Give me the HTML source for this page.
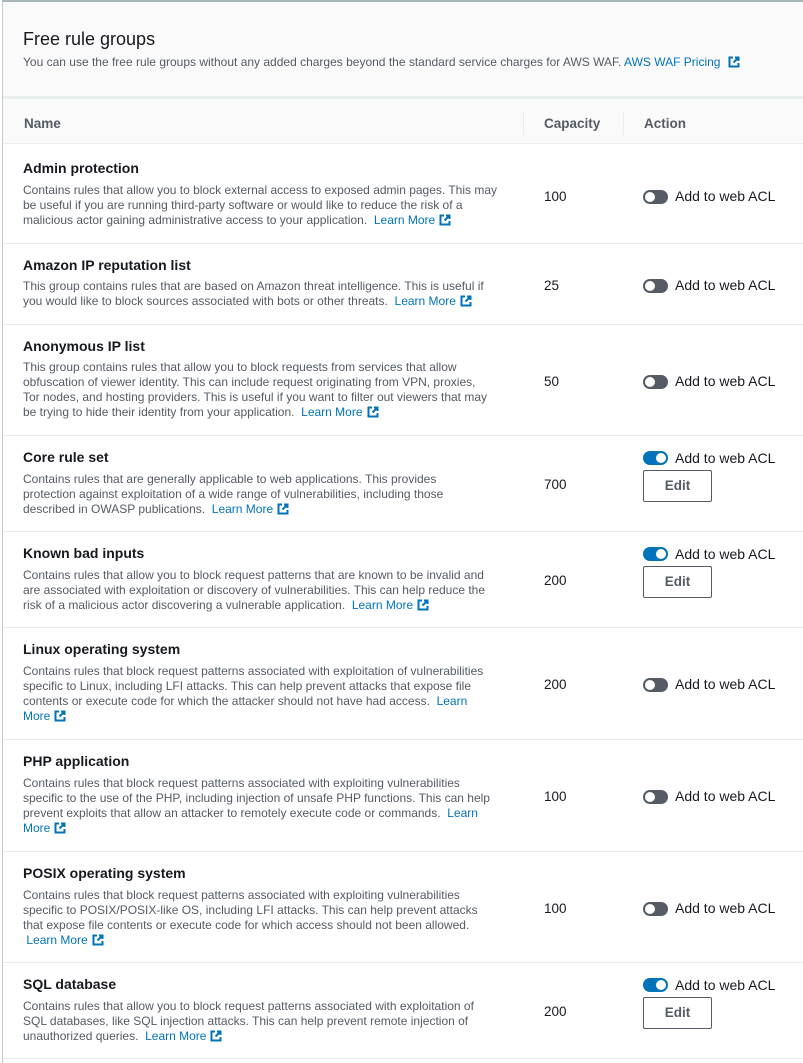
<!DOCTYPE html>
<html><head><meta charset="utf-8"><style>
*{margin:0;padding:0;box-sizing:border-box}
body{width:803px;height:1063px;overflow:hidden;background:#fff;font-family:"Liberation Sans",sans-serif;color:#16191f;position:relative}
.frame{position:absolute;left:2px;top:0;width:801px;height:1063px;border-left:1px solid #c8cccc;border-top:2px solid #aab7b8}
.hdr{position:absolute;left:3px;top:2px;width:800px;height:95px;background:#fafafa}
.h1{position:absolute;left:23px;top:29px;font-size:18px;color:#16191f}
.sub{position:absolute;left:23px;top:55px;font-size:12px;color:#545b64;white-space:nowrap}
a{color:#0073bb;text-decoration:none}
.band{position:absolute;left:3px;top:96px;width:800px;height:3px;background:#eaeded}
.th{position:absolute;left:3px;top:99px;width:800px;height:45px;background:#fafafa;border-bottom:1px solid #eaeded;font-weight:bold;font-size:13.5px;color:#545b64}
.th span{position:absolute;top:17px}
.sep{position:absolute;top:12px;width:1px;height:24px;background:#eaeded}
.row{position:absolute;left:3px;width:800px;border-bottom:1px solid #eaeded}
.t{position:absolute;left:20px;font-weight:bold;font-size:14px;white-space:nowrap}
.d{position:absolute;left:20px;font-size:12px;line-height:15px;color:#545b64;white-space:nowrap}
.cap{position:absolute;left:541px;font-size:13.5px}
.tg{position:absolute;left:640px;width:25px;height:14px;border-radius:7px;background:#545b64}
.tg::after{content:"";position:absolute;top:2px;left:2px;width:10px;height:10px;border-radius:50%;background:#fff}
.tg.on{background:#0073bb}.tg.on::after{left:13px}
.lb{position:absolute;left:672px;font-size:14px;white-space:nowrap}
.ed{position:absolute;left:640px;width:69px;height:32px;border:1px solid #545b64;border-radius:2px;font-weight:bold;font-size:13.5px;color:#545b64;text-align:center;line-height:30px}
.ex{display:inline-block;width:12px;height:12px;vertical-align:-2px;margin-left:4px}
</style></head><body>
<div class="hdr"></div>
<div class="frame"></div>
<div class="h1">Free rule groups</div>
<div class="sub">You can use the free rule groups without any added charges beyond the standard service charges for AWS WAF. <a>AWS WAF Pricing <svg class="ex" viewBox="0 0 12 12"><path d="M5 1.5H1.5v9h9V7M7 1.5h3.5V5M10.5 1.5 5.5 6.5" fill="none" stroke="#0073bb" stroke-width="2"/></svg></a></div>
<div class="band"></div>
<div class="th"><span style="left:21px">Name</span><div class="sep" style="left:520px"></div><span style="left:541px">Capacity</span><div class="sep" style="left:620px"></div><span style="left:641px">Action</span></div>

<div class="row" style="top:144px;height:100px">
<div class="t" style="top:16px">Admin protection</div>
<div class="d" style="top:39px">Contains rules that allow you to block external access to exposed admin pages. This may<br>be useful if you are running third-party software or would like to reduce the risk of a<br>malicious actor gaining administrative access to your application.&nbsp; <a>Learn More<svg class="ex" viewBox="0 0 12 12"><path d="M5 1.5H1.5v9h9V7M7 1.5h3.5V5M10.5 1.5 5.5 6.5" fill="none" stroke="#0073bb" stroke-width="2"/></svg></a></div>
<div class="cap" style="top:45px">100</div><div class="tg" style="top:46px"></div><div class="lb" style="top:44px">Add to web ACL</div></div>

<div class="row" style="top:244px;height:81px">
<div class="t" style="top:13px">Amazon IP reputation list</div>
<div class="d" style="top:35px">This group contains rules that are based on Amazon threat intelligence. This is useful if<br>you would like to block sources associated with bots or other threats.&nbsp; <a>Learn More<svg class="ex" viewBox="0 0 12 12"><path d="M5 1.5H1.5v9h9V7M7 1.5h3.5V5M10.5 1.5 5.5 6.5" fill="none" stroke="#0073bb" stroke-width="2"/></svg></a></div>
<div class="cap" style="top:34px">25</div><div class="tg" style="top:35px"></div><div class="lb" style="top:33px">Add to web ACL</div></div>

<div class="row" style="top:325px;height:111px">
<div class="t" style="top:13px">Anonymous IP list</div>
<div class="d" style="top:35px">This group contains rules that allow you to block requests from services that allow<br>obfuscation of viewer identity. This can include request originating from VPN, proxies,<br>Tor nodes, and hosting providers. This is useful if you want to filter out viewers that may<br>be trying to hide their identity from your application.&nbsp; <a>Learn More<svg class="ex" viewBox="0 0 12 12"><path d="M5 1.5H1.5v9h9V7M7 1.5h3.5V5M10.5 1.5 5.5 6.5" fill="none" stroke="#0073bb" stroke-width="2"/></svg></a></div>
<div class="cap" style="top:49px">50</div><div class="tg" style="top:50px"></div><div class="lb" style="top:48px">Add to web ACL</div></div>

<div class="row" style="top:436px;height:96px">
<div class="t" style="top:13px">Core rule set</div>
<div class="d" style="top:36px">Contains rules that are generally applicable to web applications. This provides<br>protection against exploitation of a wide range of vulnerabilities, including those<br>described in OWASP publications.&nbsp; <a>Learn More<svg class="ex" viewBox="0 0 12 12"><path d="M5 1.5H1.5v9h9V7M7 1.5h3.5V5M10.5 1.5 5.5 6.5" fill="none" stroke="#0073bb" stroke-width="2"/></svg></a></div>
<div class="cap" style="top:41px">700</div><div class="tg on" style="top:15px"></div><div class="lb" style="top:14px">Add to web ACL</div><div class="ed" style="top:34px">Edit</div></div>

<div class="row" style="top:532px;height:96px">
<div class="t" style="top:13px">Known bad inputs</div>
<div class="d" style="top:36px">Contains rules that allow you to block request patterns that are known to be invalid and<br>are associated with exploitation or discovery of vulnerabilities. This can help reduce the<br>risk of a malicious actor discovering a vulnerable application.&nbsp; <a>Learn More<svg class="ex" viewBox="0 0 12 12"><path d="M5 1.5H1.5v9h9V7M7 1.5h3.5V5M10.5 1.5 5.5 6.5" fill="none" stroke="#0073bb" stroke-width="2"/></svg></a></div>
<div class="cap" style="top:41px">200</div><div class="tg on" style="top:15px"></div><div class="lb" style="top:14px">Add to web ACL</div><div class="ed" style="top:34px">Edit</div></div>

<div class="row" style="top:628px;height:112px">
<div class="t" style="top:13px">Linux operating system</div>
<div class="d" style="top:36px">Contains rules that block request patterns associated with exploitation of vulnerabilities<br>specific to Linux, including LFI attacks. This can help prevent attacks that expose file<br>contents or execute code for which the attacker should not have had access.&nbsp; <a>Learn</a><br><a>More<svg class="ex" viewBox="0 0 12 12"><path d="M5 1.5H1.5v9h9V7M7 1.5h3.5V5M10.5 1.5 5.5 6.5" fill="none" stroke="#0073bb" stroke-width="2"/></svg></a></div>
<div class="cap" style="top:49px">200</div><div class="tg" style="top:50px"></div><div class="lb" style="top:48px">Add to web ACL</div></div>

<div class="row" style="top:740px;height:112px">
<div class="t" style="top:13px">PHP application</div>
<div class="d" style="top:36px">Contains rules that block request patterns associated with exploiting vulnerabilities<br>specific to the use of the PHP, including injection of unsafe PHP functions. This can help<br>prevent exploits that allow an attacker to remotely execute code or commands.&nbsp; <a>Learn</a><br><a>More<svg class="ex" viewBox="0 0 12 12"><path d="M5 1.5H1.5v9h9V7M7 1.5h3.5V5M10.5 1.5 5.5 6.5" fill="none" stroke="#0073bb" stroke-width="2"/></svg></a></div>
<div class="cap" style="top:49px">100</div><div class="tg" style="top:50px"></div><div class="lb" style="top:48px">Add to web ACL</div></div>

<div class="row" style="top:852px;height:111px">
<div class="t" style="top:13px">POSIX operating system</div>
<div class="d" style="top:36px">Contains rules that block request patterns associated with exploiting vulnerabilities<br>specific to POSIX/POSIX-like OS, including LFI attacks. This can help prevent attacks<br>that expose file contents or execute code for which access should not been allowed.<br>&nbsp;<a>Learn More<svg class="ex" viewBox="0 0 12 12"><path d="M5 1.5H1.5v9h9V7M7 1.5h3.5V5M10.5 1.5 5.5 6.5" fill="none" stroke="#0073bb" stroke-width="2"/></svg></a></div>
<div class="cap" style="top:49px">100</div><div class="tg" style="top:50px"></div><div class="lb" style="top:48px">Add to web ACL</div></div>

<div class="row" style="top:963px;height:96px">
<div class="t" style="top:13px">SQL database</div>
<div class="d" style="top:36px">Contains rules that allow you to block request patterns associated with exploitation of<br>SQL databases, like SQL injection attacks. This can help prevent remote injection of<br>unauthorized queries.&nbsp; <a>Learn More<svg class="ex" viewBox="0 0 12 12"><path d="M5 1.5H1.5v9h9V7M7 1.5h3.5V5M10.5 1.5 5.5 6.5" fill="none" stroke="#0073bb" stroke-width="2"/></svg></a></div>
<div class="cap" style="top:41px">200</div><div class="tg on" style="top:15px"></div><div class="lb" style="top:14px">Add to web ACL</div><div class="ed" style="top:34px">Edit</div></div>
</body></html>
